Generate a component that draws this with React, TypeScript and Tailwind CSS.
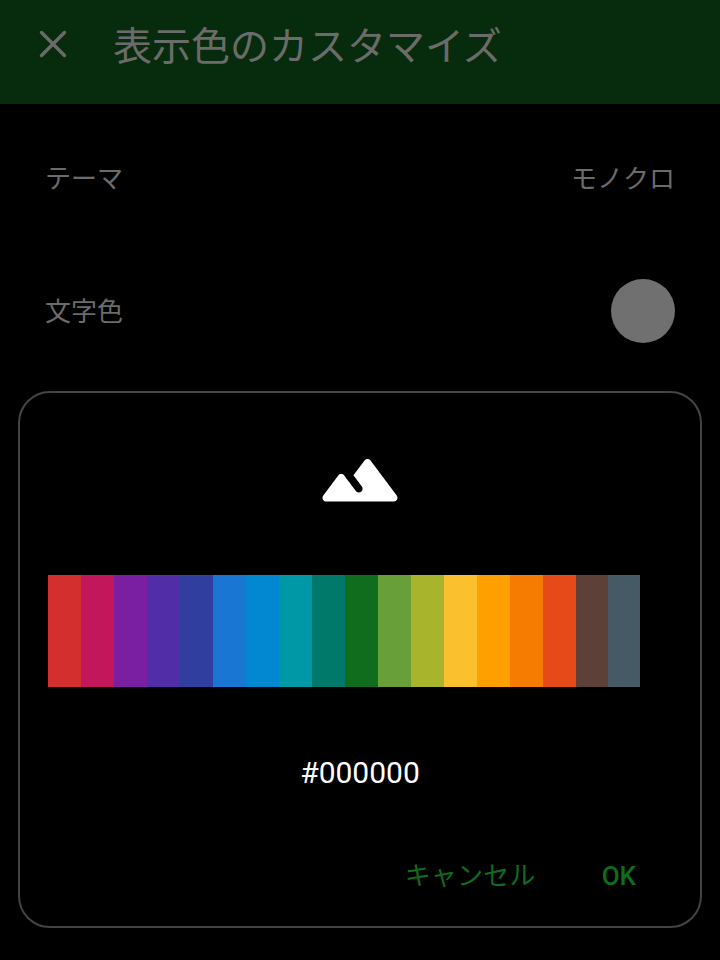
const SWATCHES = [
  "bg-[#d32f2f] w-[33px]",
  "bg-[#c2185b] w-[33px]",
  "bg-[#7b1fa2] w-[33px]",
  "bg-[#512da8] w-[33px]",
  "bg-[#303f9f] w-[33px]",
  "bg-[#1976d2] w-[33px]",
  "bg-[#0288d1] w-[33px]",
  "bg-[#0097a7] w-[33px]",
  "bg-[#00796b] w-[33px]",
  "bg-[#116d1e] w-[33px]",
  "bg-[#689f38] w-[33px]",
  "bg-[#a8b42c] w-[33px]",
  "bg-[#fbc02d] w-[33px]",
  "bg-[#ffa000] w-[33px]",
  "bg-[#f57c00] w-[33px]",
  "bg-[#e64a19] w-[33px]",
  "bg-[#5d4037] w-[32px]",
  "bg-[#455a64] w-[32px]",
];

export default function App() {
  return (
    <div className="w-[720px] h-[960px] overflow-hidden bg-black font-['Roboto','Noto_Sans_CJK_JP',sans-serif]">
      <header className="h-[104px] bg-[#072b0d] flex items-center pl-[39px] pb-[10px]">
        <svg width="28" height="28" viewBox="0 0 28 28" className="mb-[7px]">
          <path d="M2.5 2.5 L25.5 25.5 M25.5 2.5 L2.5 25.5" stroke="#6b6b6b" strokeWidth="3.4" strokeLinecap="round" fill="none" />
        </svg>
        <h1 className="ml-[46px] text-[39px] leading-none text-[#6b6b6b] font-normal">
          表示色のカスタマイズ
        </h1>
      </header>

      <div className="flex items-center justify-between px-[45px] pt-[2px] h-[148px] text-[26px] text-[#6b6b6b]">
        <span>テーマ</span>
        <span>モノクロ</span>
      </div>
      <div className="flex items-center justify-between px-[45px] h-[118px] text-[26px] text-[#6b6b6b]">
        <span className="pt-[3px]">文字色</span>
        <div className="w-[64px] h-[64px] rounded-full bg-[#707070]" />
      </div>

      <div className="mx-[18px] mt-[21px] h-[537px] rounded-[32px] border-2 border-[#444444] flex flex-col">
        <div className="flex justify-center pt-[41px] h-[182px]">
          <svg width="90" height="90" viewBox="0 0 24 24">
            <path
              d="M13.2 7.07 10.25 11l2.25 3c.33.44.24 1.07-.2 1.4-.44.33-1.07.25-1.4-.2-1.05-1.4-2.31-3.07-3.1-4.14-.4-.53-1.2-.53-1.6 0l-4 5.33c-.49.67-.02 1.61.8 1.61h18c.82 0 1.29-.94.8-1.6l-7-9.33c-.4-.54-1.2-.54-1.6 0z"
              fill="#ffffff"
            />
          </svg>
        </div>
        <div className="flex h-[112px] ml-[28px]">
          {SWATCHES.map((c) => (
            <div key={c} className={c} />
          ))}
        </div>
        <div className="mt-[64px] text-center text-[30px] leading-[44px] text-white">#000000</div>
        <div className="mt-[62px] flex justify-end items-center pr-[64px] text-[26px] text-[#116d1e]">
          <span className="tracking-[0.2px]">キャンセル</span>
          <span className="ml-[66px] font-medium">OK</span>
        </div>
      </div>
    </div>
  );
}
